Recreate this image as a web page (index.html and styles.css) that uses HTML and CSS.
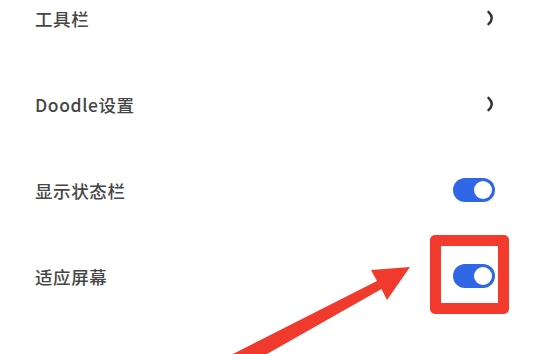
FILE: index.html
```html
<!DOCTYPE html>
<html lang="zh">
<head>
<meta charset="utf-8">
<link rel="stylesheet" href="styles.css">
</head>
<body>
<div class="page">
  <div class="list">
    <div class="row">
      <span class="label">工具栏</span>
      <svg class="chev" width="10" height="16" viewBox="0 0 10 16"><path d="M2.5 1.8 Q9 8 2.5 14.2" fill="none" stroke="#333333" stroke-width="2.5" stroke-linecap="round"/></svg>
    </div>
    <div class="row">
      <span class="label">Doodle设置</span>
      <svg class="chev" width="10" height="16" viewBox="0 0 10 16"><path d="M2.5 1.8 Q9 8 2.5 14.2" fill="none" stroke="#333333" stroke-width="2.5" stroke-linecap="round"/></svg>
    </div>
    <div class="row">
      <span class="label">显示状态栏</span>
      <span class="toggle"><span class="knob"></span></span>
    </div>
    <div class="row">
      <span class="label">适应屏幕</span>
      <span class="toggle"><span class="knob"></span></span>
    </div>
  </div>
  <div class="highlight"></div>
  <svg class="arrow" width="543" height="354" viewBox="0 0 543 354">
    <polygon points="410,267 371,270 377,281 229,356 237,371 381.5,289 387,300" fill="#f03a2e"/>
  </svg>
</div>
</body>
</html>
```
FILE: styles.css
```css
html, body {
  margin: 0;
  padding: 0;
  background: #ffffff;
}
.page {
  position: relative;
  width: 543px;
  height: 354px;
  overflow: hidden;
  font-family: "Noto Sans CJK SC", "Noto Sans", sans-serif;
}
.list {
  margin-top: -25px;
  display: flex;
  flex-direction: column;
}
.row {
  height: 86px;
  display: flex;
  align-items: center;
  justify-content: space-between;
  padding: 0 47px 0 35px;
}
.label {
  font-size: 17.5px;
  font-weight: 500;
  color: #464646;
  letter-spacing: 0.6px;
}
.chev {
  display: block;
}
.toggle {
  position: relative;
  width: 42px;
  height: 24px;
  border-radius: 12px;
  background: #2f67e6;
  display: block;
  margin-right: 1px;
}
.knob {
  position: absolute;
  right: 3px;
  top: 3px;
  width: 18px;
  height: 18px;
  border-radius: 50%;
  background: #ffffff;
}
.highlight {
  position: absolute;
  left: 430px;
  top: 235px;
  width: 57px;
  height: 57px;
  border: 11px solid #f23a2d;
  border-radius: 5px;
}
.arrow {
  position: absolute;
  left: 0;
  top: 0;
}
```
